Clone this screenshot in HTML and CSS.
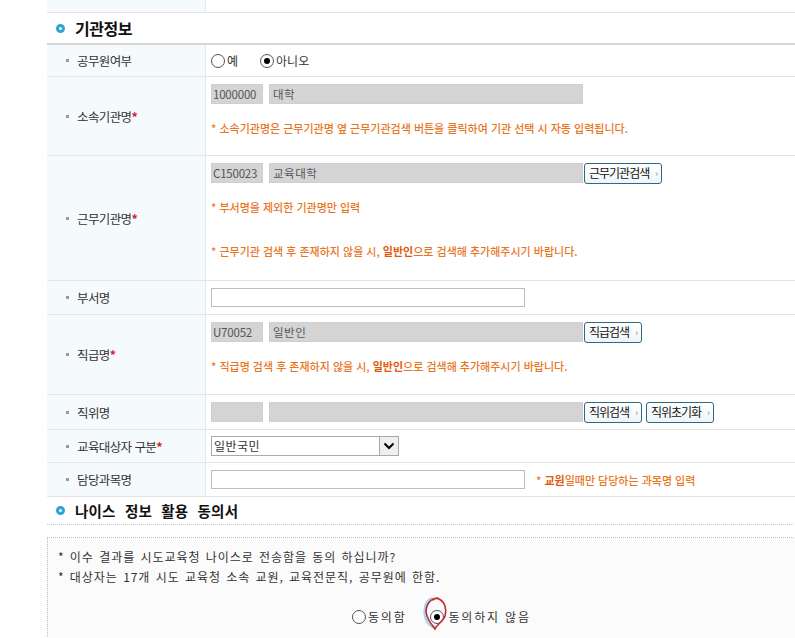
FILE: index.html
```html
<!DOCTYPE html>
<html lang="ko">
<head>
<meta charset="utf-8">
<title>기관정보</title>
<link rel="stylesheet" href="styles.css">
</head>
<body>
<div class="page">
  <div class="prev-row"><div class="th"></div><div class="td"></div></div>

  <h3 class="sec-title"><span class="ring"></span>기관정보</h3>

  <div class="form">
    <div class="row r1">
      <div class="th"><span class="sq"></span>공무원여부</div>
      <div class="td line">
        <label class="radio"><input type="radio" name="gov"><span>예</span></label>
        <label class="radio radio-2"><input type="radio" name="gov" checked><span>아니오</span></label>
      </div>
    </div>

    <div class="row r2">
      <div class="th"><span class="sq"></span>소속기관명<em>*</em></div>
      <div class="td stack">
        <div class="inputs">
          <input class="ro code" type="text" value="1000000" readonly>
          <input class="ro name" type="text" value="대학" readonly>
        </div>
        <p class="note">* 소속기관명은 근무기관명 옆 근무기관검색 버튼을 클릭하여 기관 선택 시 자동 입력됩니다.</p>
      </div>
    </div>

    <div class="row r3">
      <div class="th"><span class="sq"></span>근무기관명<em>*</em></div>
      <div class="td stack">
        <div class="inputs">
          <input class="ro code" type="text" value="C150023" readonly>
          <input class="ro name" type="text" value="교육대학" readonly>
          <button class="btn" type="button">근무기관검색<i>›</i></button>
        </div>
        <p class="note">* 부서명을 제외한 기관명만 입력</p>
        <p class="note note-2">* 근무기관 검색 후 존재하지 않을 시, <b>일반인</b>으로 검색해 추가해주시기 바랍니다.</p>
      </div>
    </div>

    <div class="row r4">
      <div class="th"><span class="sq"></span>부서명</div>
      <div class="td line"><input class="txt" type="text"></div>
    </div>

    <div class="row r5">
      <div class="th"><span class="sq"></span>직급명<em>*</em></div>
      <div class="td stack">
        <div class="inputs">
          <input class="ro code" type="text" value="U70052" readonly>
          <input class="ro name" type="text" value="일반인" readonly>
          <button class="btn" type="button">직급검색<i>›</i></button>
        </div>
        <p class="note">* 직급명 검색 후 존재하지 않을 시, <b>일반인</b>으로 검색해 추가해주시기 바랍니다.</p>
      </div>
    </div>

    <div class="row r6">
      <div class="th"><span class="sq"></span>직위명</div>
      <div class="td line">
        <div class="inputs">
          <input class="ro code" type="text" readonly>
          <input class="ro name" type="text" readonly>
          <button class="btn" type="button">직위검색<i>›</i></button>
          <button class="btn btn-gap" type="button">직위초기화<i>›</i></button>
        </div>
      </div>
    </div>

    <div class="row r7">
      <div class="th"><span class="sq"></span>교육대상자 구분<em>*</em></div>
      <div class="td line">
        <div class="select"><span class="sel-text">일반국민</span><span class="sel-btn"><svg width="12" height="8" viewBox="0 0 12 8"><path d="M1.5 1.5 L6 6 L10.5 1.5" fill="none" stroke="#000" stroke-width="2"/></svg></span></div>
      </div>
    </div>

    <div class="row r8">
      <div class="th"><span class="sq"></span>담당과목명</div>
      <div class="td line">
        <input class="txt" type="text">
        <span class="note side">* <b>교원</b>일때만 담당하는 과목명 입력</span>
      </div>
    </div>
  </div>

  <h3 class="sec-title sec-2"><span class="ring"></span>나이스 정보 활용 동의서</h3>

  <div class="consent">
    <p>* 이수 결과를 시도교육청 나이스로 전송함을 동의 하십니까?</p>
    <p>* 대상자는 17개 시도 교육청 소속 교원, 교육전문직, 공무원에 한함.</p>
    <div class="agree">
      <label class="radio"><input type="radio" name="agree"><span>동의함</span></label>
      <label class="radio radio-3"><input type="radio" name="agree" checked><span>동의하지 않음</span>
        <svg class="mark" width="36" height="42" viewBox="0 0 36 42"><path d="M9 6 C3 10 2 18 4 25 C6 30 9 33 12 34" fill="none" stroke="#a9d6ef" stroke-width="3.5" stroke-linecap="round"/><path d="M16 5 C9 5 4 11 4 19 C5 26 9 31 13 36 C15 31 21 29 23 23 C25 16 23 9 17 6 C14 5 12 6 11 7" fill="none" stroke="#c4272f" stroke-width="1.6" stroke-linecap="round"/></svg>
      </label>
    </div>
  </div>
</div>
</body>
</html>
```

FILE: styles.css
```css
* { box-sizing: border-box; }
html, body { margin: 0; padding: 0; }
body {
  background: #fff;
  font-family: "Noto Sans CJK KR", "Noto Sans", sans-serif;
  color: #333;
  overflow: hidden;
}
.page {
  padding-left: 47px;
  width: 830px;
}
p { margin: 0; }

.prev-row {
  display: grid;
  grid-template-columns: 159px 1fr;
  height: 13px;
  border-bottom: 1px solid #e3e3e3;
}
.prev-row .th, .row .th {
  background: #f5fafd;
  border-right: 1px solid #e0e8ee;
}

.sec-title {
  margin: 0;
  height: 30px;
  display: flex;
  align-items: center;
  gap: 10px;
  padding-left: 9px;
  font-size: 16px;
  font-weight: bold;
  color: #111;
  letter-spacing: -0.5px;
}
.ring {
  width: 9px;
  height: 9px;
  border-radius: 50%;
  border: 3px solid #2ba4d8;
  background: #fff;
  flex: none;
}
.sec-2 {
  height: 28px;
  font-size: 14.5px;
  letter-spacing: 0.2px;
  word-spacing: 5px;
  border-bottom: 1px dotted #c4c4c4;
}

.form { border-top: 2px solid #d6d6d6; }
.row {
  display: grid;
  grid-template-columns: 159px 1fr;
  border-bottom: 1px solid #e5e5e5;
}
.r1 { height: 32px; }
.r2 { height: 79px; }
.r3 { height: 125px; }
.r4 { height: 34px; }
.r5 { height: 80px; }
.r6 { height: 35px; }
.r7 { height: 33px; }
.r8 { height: 34px; }

.row .th {
  display: flex;
  align-items: center;
  padding-left: 19px;
  font-size: 12.5px;
  letter-spacing: -0.6px;
  color: #333;
}
.sq {
  width: 3px;
  height: 3px;
  background: #999;
  margin-right: 8px;
  flex: none;
}
.th em {
  font-style: normal;
  color: #d8242c;
  font-weight: bold;
}

.td { padding-left: 5px; }
.td.line { display: flex; align-items: center; }
.td.stack { display: flex; flex-direction: column; padding-top: 7px; }

.inputs { display: flex; align-items: center; height: 20px; }
input.ro {
  height: 20px;
  border: 1px solid #cfcfcf;
  background: #d4d4d4;
  font-family: "Noto Sans CJK KR", sans-serif;
  font-size: 11.5px;
  color: #555;
  padding: 0 1px;
  outline: none;
}
input.code { width: 52px; margin-right: 6px; letter-spacing: -0.2px; }
input.name { width: 314px; letter-spacing: 0.5px; padding-left: 3px; }
input.txt {
  width: 314px;
  height: 19px;
  border: 1px solid #bdbdbd;
  background: #fff;
  padding: 0 3px;
  outline: none;
}

.btn {
  height: 21px;
  margin-left: 1px;
  padding: 0 4px 0 4px;
  border: 1px solid #2c6a83;
  border-radius: 3px;
  background: linear-gradient(#ffffff, #eef5f8);
  font-family: "Noto Sans CJK KR", sans-serif;
  font-size: 12px;
  letter-spacing: -1px;
  color: #111;
  display: flex;
  align-items: center;
  line-height: 1;
}
.btn i {
  font-style: normal;
  color: #888;
  font-size: 9px;
  margin-left: 6px;
}
.btn-gap { margin-left: 4px; }

.note {
  margin-top: 14px;
  line-height: 20px;
  font-size: 11px;
  font-weight: 500;
  letter-spacing: 0;
  color: #e8761f;
}
.note b { color: #e05a0c; font-weight: bold; }
.note-2 { margin-top: 24px; }
.note.side { margin: 0 0 0 11px; }

.radio {
  display: inline-flex;
  align-items: center;
  font-size: 12px;
  color: #333;
  cursor: pointer;
}
.radio input {
  appearance: none;
  -webkit-appearance: none;
  width: 14px;
  height: 14px;
  margin: 0 2px 0 0;
  border: 1px solid #555;
  border-radius: 50%;
  background: #fff;
  display: grid;
  place-items: center;
}
.radio input:checked::after {
  content: "";
  width: 6px;
  height: 6px;
  border-radius: 50%;
  background: #000;
}
.radio-2 { margin-left: 22px; }

.select {
  width: 188px;
  height: 20px;
  border: 1px solid #a9a9a9;
  display: flex;
  align-items: stretch;
  font-size: 12px;
  color: #333;
}
.sel-text {
  flex: 1;
  padding-left: 2px;
  line-height: 18px;
  letter-spacing: 0.5px;
}
.sel-btn {
  width: 19px;
  border-left: 1px solid #a9a9a9;
  background: #efefef;
  display: grid;
  place-items: center;
}

.consent {
  margin-top: 12px;
  border: 1px dotted #bdbdbd;
  background: #fbfbfb;
  padding: 9px 10px 0 10px;
  height: 120px;
}
.consent p {
  font-size: 12px;
  line-height: 20px;
  letter-spacing: 0.95px;
  word-spacing: 1px;
  color: #333;
}
.agree {
  display: flex;
  align-items: center;
  gap: 23px;
  margin-top: 21px;
  padding-left: 294px;
}
.agree .radio { letter-spacing: 1.8px; }
.radio-3 input { margin-right: 5px; }
.radio-3 { position: relative; }
.mark {
  position: absolute;
  left: -8px;
  top: -15px;
  pointer-events: none;
}
```
